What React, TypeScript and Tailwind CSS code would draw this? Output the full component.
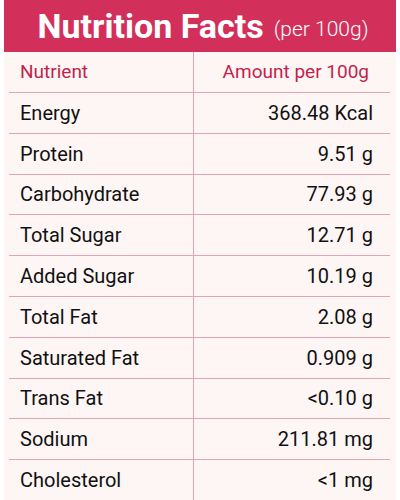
const rows: [string, string][] = [
  ['Energy', '368.48 Kcal'],
  ['Protein', '9.51 g'],
  ['Carbohydrate', '77.93 g'],
  ['Total Sugar', '12.71 g'],
  ['Added Sugar', '10.19 g'],
  ['Total Fat', '2.08 g'],
  ['Saturated Fat', '0.909 g'],
  ['Trans Fat', '<0.10 g'],
  ['Sodium', '211.81 mg'],
  ['Cholesterol', '<1 mg'],
];

export default function App() {
  return (
    <div className="w-[400px] h-[500px] bg-white px-[4px] flex flex-col font-['Roboto',sans-serif] overflow-hidden">
      <div className="h-[52px] bg-[#d2305b] flex items-center justify-center gap-[10px] text-white shrink-0 pl-[6px]">
        <span className="text-[34px] font-bold leading-none">Nutrition Facts</span>
        <span className="text-[21px] font-light leading-none mt-[6px]">(per 100g)</span>
      </div>
      <div className="flex-1 bg-[#fdf6f5] pl-[5px] pr-[6px] flex flex-col">
        <div className="h-[41px] flex border-b-[1.5px] border-[#e5a3b6] shrink-0">
          <div className="w-[185px] border-r-[1.5px] border-[#e5a3b6] flex items-center pl-[11px] text-[19px] text-[#c41f4c]">
            Nutrient
          </div>
          <div className="flex-1 flex items-center justify-end pr-[21px] text-[19px] text-[#c41f4c]">
            Amount per 100g
          </div>
        </div>
        {rows.map(([name, value], i) => (
          <div
            key={name}
            className={
              i < rows.length - 1
                ? 'flex-1 flex border-b-[1.5px] border-[#e5a3b6]'
                : 'flex-1 flex'
            }
          >
            <div className="w-[185px] border-r-[1.5px] border-[#e5a3b6] flex items-center pl-[11px] text-[20px] text-[#111111]">
              {name}
            </div>
            <div className="flex-1 flex items-center justify-end pr-[17px] text-[20px] text-[#111111]">
              {value}
            </div>
          </div>
        ))}
      </div>
    </div>
  );
}
